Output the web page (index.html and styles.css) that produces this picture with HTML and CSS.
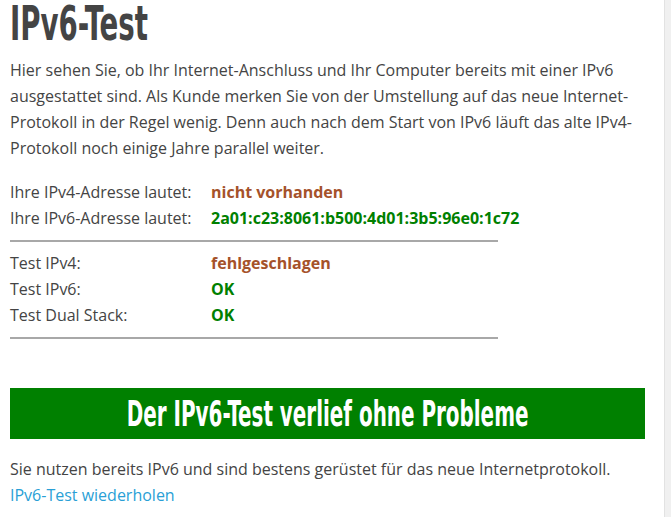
FILE: index.html
```html
<!DOCTYPE html>
<html lang="de">
<head>
    <meta charset="UTF-8">
    <meta name="viewport" content="width=device-width, initial-scale=1.0">
    <title>IPv6-Test</title>
    <link rel="stylesheet" href="styles.css">
</head>
<body>
    <div class="page">
        <div class="content">
            <h1 class="title"><span class="condensed">IPv6-Test</span></h1>

            <p class="intro">
                Hier sehen Sie, ob Ihr Internet-Anschluss und Ihr Computer bereits mit einer IPv6
                ausgestattet sind. Als Kunde merken Sie von der Umstellung auf das neue Internet-Protokoll
                in der Regel wenig. Denn auch nach dem Start von IPv6 läuft das alte IPv4-Protokoll
                noch einige Jahre parallel weiter.
            </p>

            <div class="result-table">
                <div class="label">Ihre IPv4-Adresse lautet:</div>
                <div class="value fail">nicht vorhanden</div>
                <div class="label">Ihre IPv6-Adresse lautet:</div>
                <div class="value ok">2a01:c23:8061:b500:4d01:3b5:96e0:1c72</div>
            </div>

            <div class="divider"></div>

            <div class="result-table">
                <div class="label">Test IPv4:</div>
                <div class="value fail">fehlgeschlagen</div>
                <div class="label">Test IPv6:</div>
                <div class="value ok">OK</div>
                <div class="label">Test Dual Stack:</div>
                <div class="value ok">OK</div>
            </div>

            <div class="divider"></div>

            <div class="verdict"><span class="condensed">Der IPv6-Test verlief ohne Probleme</span></div>

            <p class="summary">
                Sie nutzen bereits IPv6 und sind bestens gerüstet für das neue Internetprotokoll.<br>
                <a href="#" class="retry">IPv6-Test wiederholen</a>
            </p>
        </div>
    </div>
</body>
</html>
```

FILE: styles.css
```css
* {
    margin: 0;
    padding: 0;
    box-sizing: border-box;
}

html {
    background-color: #f0f0f0;
}

body {
    font-family: "Open Sans", "DejaVu Sans", sans-serif;
    font-size: 16px;
    line-height: 26px;
    color: #444;
}

.page {
    width: 665px;
    min-height: 517px;
    background-color: #fff;
    border-right: 1px solid #e2e2e2;
}

.content {
    width: 645px;
    padding-left: 10px;
}

/* no Oswald offline: squeeze DejaVu Condensed to get the narrow headline look */
.condensed {
    display: inline-block;
    white-space: nowrap;
    font-family: "DejaVu Sans Condensed", "DejaVu Sans", sans-serif;
    font-weight: bold;
}

.title {
    font-size: 48px;
    line-height: 42px;
    padding-top: 1px;
    font-weight: normal;
    color: #444;
}

.title .condensed {
    transform: scaleX(0.64);
    transform-origin: left center;
}

.intro {
    margin-top: 13px;
    margin-bottom: 18px;
}

.result-table {
    display: grid;
    grid-template-columns: 201px auto;
}

.value {
    font-weight: bold;
}

.value.fail {
    color: #a5522a;
}

.value.ok {
    color: #008000;
}

.divider {
    width: 488px;
    border-top: 2px solid #a8a8a8;
    margin: 9px 0 8px;
}

.verdict {
    margin-top: 49px;
    height: 51px;
    overflow: hidden;
    display: flex;
    justify-content: center;
    align-items: center;
    background-color: #008000;
    color: #fff;
    font-size: 36px;
    line-height: 51px;
}

.verdict .condensed {
    flex-shrink: 0;
    transform: scaleX(0.615);
}

.summary {
    margin-top: 17px;
}

.retry {
    color: #2a9fd6;
    text-decoration: none;
}
```
